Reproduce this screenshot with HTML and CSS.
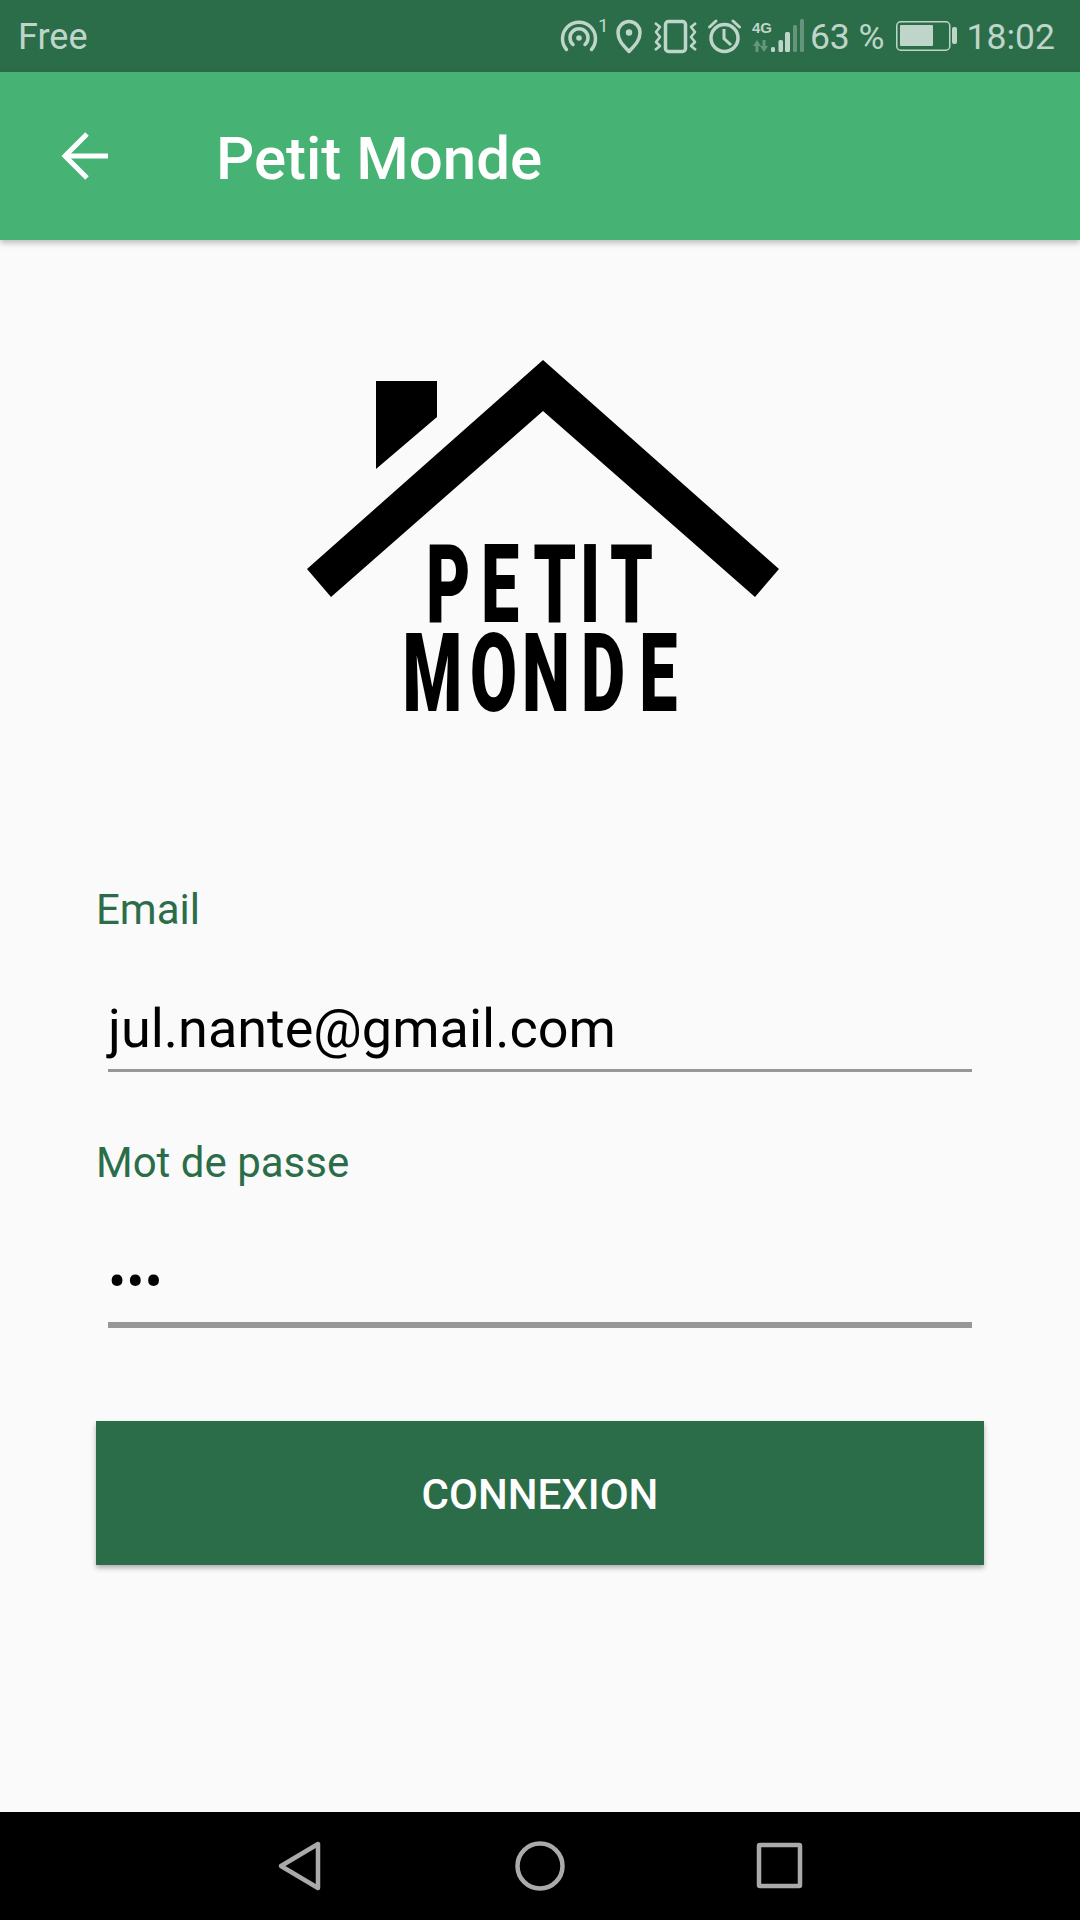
FILE: index.html
```html
<!DOCTYPE html>
<html lang="fr">
<head>
  <meta charset="UTF-8" />
  <meta name="viewport" content="width=device-width, initial-scale=1.0"/>
  <title>Petit Monde</title>
  <link rel="stylesheet" href="styles.css">
</head>
<body>
  <div class="phone">
    <div class="status-bar">
      <span class="carrier">Free</span>
      <div class="status-icons">
        <div class="hotspot">
          <svg width="38" height="36" viewBox="0 0 38 36" fill="none" stroke="currentColor" stroke-width="3.5" stroke-linecap="round">
            <path d="M6.5 31.5A16.5 16.5 0 1 1 31.5 31.5"/>
            <path d="M13 26.5A9 9 0 1 1 25 26.5"/>
            <circle cx="19" cy="20" r="2.8" fill="currentColor" stroke="none"/>
          </svg>
          <span class="hotspot-count">1</span>
        </div>
        <svg width="29" height="36" viewBox="0 0 29 36" fill="none" stroke="currentColor" stroke-width="3.5" stroke-linejoin="round">
          <path d="M14 33.5C9 28 3 23 3 14.5A11 11 0 0 1 25 14.5C25 23 19 28 14 33.5Z"/>
          <circle cx="14" cy="14.5" r="3.2" fill="currentColor" stroke="none"/>
        </svg>
        <svg width="45" height="36" viewBox="0 0 45 36" fill="none" stroke="currentColor" stroke-linejoin="round">
          <rect x="12.5" y="3.5" width="20" height="30" rx="3" stroke-width="3.5"/>
          <path d="M2 5L7 9L3 14L7 19L3 24L7 28L2 32" stroke-width="2.6"/>
          <path d="M43 5L38 9L42 14L38 19L42 24L38 28L43 32" stroke-width="2.6"/>
        </svg>
        <svg width="35" height="36" viewBox="0 0 35 36" fill="none" stroke="currentColor" stroke-width="3.5">
          <circle cx="17.5" cy="20" r="13.5"/>
          <path d="M17 11V20.5L24 27" stroke-width="3"/>
          <path d="M2.5 9L9 3M32.5 9L26 3" stroke-width="3" stroke-linecap="round"/>
        </svg>
        <svg width="54" height="36" viewBox="0 0 54 36" fill="currentColor">
          <text class="net-type" x="1" y="15">4G</text>
          <g opacity="0.4">
            <path d="M6 22L10 28H7.5V34H4.5V28H2Z"/>
            <path d="M13 34L9 28H11.5V22H14.5V28H17Z"/>
          </g>
          <rect x="20" y="29" width="4" height="5" rx="1.5"/>
          <rect x="27.5" y="22" width="4.5" height="12" rx="1.5"/>
          <rect x="34" y="14" width="5" height="20" rx="1.5"/>
          <rect x="42" y="7" width="4" height="27" rx="1.5" opacity="0.4"/>
          <rect x="49" y="1" width="4" height="33" rx="1.5" opacity="0.4"/>
        </svg>
        <span class="battery-level">63 %</span>
        <svg class="battery" width="62" height="36" viewBox="0 0 62 36" fill="currentColor">
          <rect x="0.75" y="3.75" width="53" height="28.5" rx="4" fill="none" stroke="currentColor" stroke-width="1.5"/>
          <rect x="4" y="7" width="33" height="21" rx="1"/>
          <rect x="56" y="9" width="5" height="17" rx="2"/>
        </svg>
        <span class="clock">18:02</span>
      </div>
    </div>

    <header class="app-bar">
      <svg class="back" width="48" height="48" viewBox="0 0 48 48" fill="none" stroke="#fff" stroke-width="5">
        <path d="M47 24H4"/>
        <path d="M26 2L4 24L26 46"/>
      </svg>
      <h1 class="app-title">Petit Monde</h1>
    </header>

    <main class="content">
      <div class="logo">
        <svg width="486" height="390" viewBox="300 355 486 390">
          <path d="M543 360L779 569L755 597L543 411L331 597L307 569Z"/>
          <path d="M376 381H437V417L376 469Z"/>
          <text class="logo-text" transform="scale(0.62 1)" x="687 776 860 935 984" y="622">PETIT</text>
          <text class="logo-text" transform="scale(0.62 1)" x="649 758 842 937 1031" y="711">MONDE</text>
        </svg>
      </div>

      <form class="login-form">
        <label class="field-label">Email</label>
        <div class="field-value">jul.nante@gmail.com</div>
        <label class="field-label">Mot de passe</label>
        <div class="field-value password">•••</div>
        <button type="button" class="submit">CONNEXION</button>
      </form>
    </main>

    <nav class="nav-bar">
      <svg width="50" height="52" viewBox="0 0 50 52" fill="none" stroke="#aaa" stroke-width="4.5" stroke-linejoin="round">
        <path d="M43 4V48L6 26Z"/>
      </svg>
      <svg width="50" height="52" viewBox="0 0 50 52" fill="none" stroke="#aaa" stroke-width="4.5">
        <circle cx="25" cy="26" r="22.5"/>
      </svg>
      <svg width="50" height="52" viewBox="0 0 50 52" fill="none" stroke="#aaa" stroke-width="4.5" stroke-linejoin="round">
        <rect x="4" y="5" width="41" height="41" rx="1"/>
      </svg>
    </nav>
  </div>
</body>
</html>
```

FILE: styles.css
```css
* {
  margin: 0;
  padding: 0;
  box-sizing: border-box;
}

html, body {
  width: 100%;
  height: 100%;
  background: #fafafa;
  overflow: hidden;
  font-family: Roboto, sans-serif;
}

.phone {
  display: flex;
  flex-direction: column;
  height: 1920px;
}

.status-bar {
  display: flex;
  align-items: center;
  justify-content: space-between;
  height: 72px;
  padding: 0 25px 0 18px;
  background: #2b6d49;
  color: #bfd5c9;
  font-size: 36px;
}

.carrier, .battery-level, .clock {
  padding-top: 2px;
}

.battery-level, .clock {
  font-size: 35.5px;
}

.status-icons {
  display: flex;
  align-items: center;
  gap: 9px;
}

.status-icons svg {
  display: block;
}

.hotspot {
  display: flex;
  align-items: flex-start;
}

.hotspot-count {
  width: 8px;
  font-size: 19px;
  line-height: 15px;
}

.net-type {
  font-family: "Liberation Sans", sans-serif;
  font-size: 15px;
  font-weight: 700;
}

.battery-level {
  margin-left: -4px;
}

.battery {
  margin-left: 2px;
}

.app-bar {
  display: flex;
  align-items: center;
  height: 168px;
  padding-left: 61px;
  background: #46b274;
  box-shadow: 0 3px 6px rgba(0, 0, 0, 0.25);
  position: relative;
}

.back {
  display: block;
}

.app-title {
  margin-left: 107px;
  padding-top: 5px;
  color: white;
  font-size: 60px;
  font-weight: 500;
}

.content {
  flex: 1;
  padding: 115px 96px 0;
}

.logo {
  display: flex;
  justify-content: center;
  padding-left: 6px;
  margin: 0 -96px;
}

.logo svg {
  display: block;
}

.logo-text {
  font-family: Roboto, sans-serif;
  font-size: 110px;
  font-weight: 900;
}

.login-form {
  margin-top: 141px;
}

.field-label {
  display: block;
  font-size: 42px;
  line-height: 48px;
  color: #2b6d49;
}

.field-value {
  margin: 65px 12px 67px;
  padding-bottom: 10px;
  border-bottom: 3px solid #979797;
  font-size: 54px;
  line-height: 60px;
  color: black;
}

.field-value.password {
  margin-bottom: 93px;
  border-bottom-width: 6px;
}

.submit {
  display: block;
  width: 100%;
  height: 144px;
  padding-top: 2px;
  border: none;
  background: #2b6d49;
  color: white;
  font-family: Roboto, sans-serif;
  font-size: 42px;
  font-weight: 500;
  box-shadow: 0 3px 5px rgba(0, 0, 0, 0.3);
}

.nav-bar {
  display: flex;
  align-items: center;
  justify-content: center;
  gap: 190px;
  height: 108px;
  background: black;
}
```
